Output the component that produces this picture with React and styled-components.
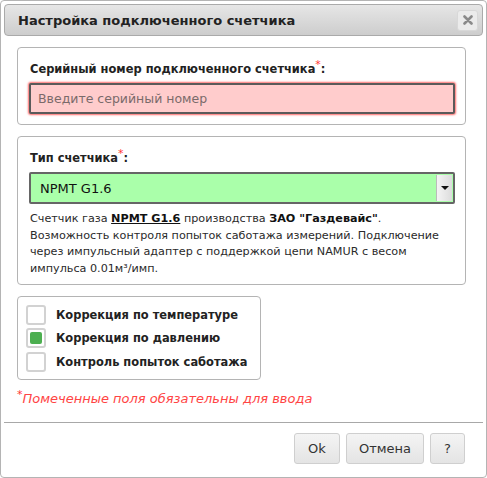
import React from 'react';
import styled, { createGlobalStyle } from 'styled-components';

const GlobalStyle = createGlobalStyle`
  html, body {
    margin: 0;
    padding: 0;
    background: #ffffff;
  }
  body {
    font-family: "DejaVu Sans", Verdana, sans-serif;
    color: #222;
  }
`;

const Dialog = styled.div`
  box-sizing: border-box;
  width: 487px;
  height: 478px;
  border: 1px solid #b4b4b4;
  border-radius: 4px;
  padding: 3px;
  display: flex;
  flex-direction: column;
  background: #fff;
`;

const TitleBar = styled.div`
  box-sizing: border-box;
  height: 32px;
  border: 1px solid #aaa;
  border-radius: 4px;
  background: linear-gradient(#e6e6e6, #cdcdcd);
  display: flex;
  align-items: center;
  justify-content: space-between;
  padding: 0 4px 0 13px;
`;

const Title = styled.span`
  font-size: 13px;
  font-weight: bold;
  color: #222;
`;

const CloseButton = styled.button`
  box-sizing: border-box;
  width: 21px;
  height: 21px;
  padding: 0;
  border: 1px solid #d8d8d8;
  border-radius: 3px;
  background: #ebebeb;
  display: flex;
  align-items: center;
  justify-content: center;
`;

const Content = styled.div`
  padding: 11px 18px 0 13px;
  display: flex;
  flex-direction: column;
`;

const Group = styled.div`
  box-sizing: border-box;
  width: ${p => p.width || '449px'};
  border: 1px solid #b4b4b4;
  border-radius: 4px;
  padding: ${p => p.pad || '13px 11px 10px 11px'};
  margin-bottom: ${p => p.gap || '11px'};
`;

const Label = styled.div`
  font-size: 11.45px;
  font-weight: bold;
  line-height: 16px;
  margin: 0 0 6px 1px;
  color: #222;
`;

const Star = styled.sup`
  color: #f33;
  font-weight: normal;
  font-size: 11px;
  vertical-align: 5px;
  line-height: 0;
`;

const Input = styled.input`
  box-sizing: border-box;
  width: 426px;
  height: 31px;
  border: 2px solid #5a5a5a;
  border-radius: 2px;
  background: #ffcccc;
  box-shadow: 0 0 2px 1px #ff6b6b;
  outline: none;
  padding: 0 7px;
  font-family: "DejaVu Sans", Verdana, sans-serif;
  font-size: 12.5px;
  color: #333;
  &::placeholder {
    color: #7a6a6a;
  }
`;

const Select = styled.div`
  box-sizing: border-box;
  width: 426px;
  height: 32px;
  border: 2px solid #666;
  border-radius: 2px;
  background: #aaffaa;
  display: flex;
  align-items: stretch;
`;

const SelectValue = styled.div`
  flex: 1;
  display: flex;
  align-items: center;
  padding-left: 9px;
  font-size: 13px;
  color: #111;
`;

const ArrowButton = styled.div`
  width: 15px;
  margin: 1px 1px 1px 0;
  background: linear-gradient(90deg, #f4f4f4, #dcdcdc);
  border-left: 1px solid #bbb;
  display: flex;
  align-items: center;
  justify-content: center;
`;

const Triangle = styled.div`
  width: 0;
  height: 0;
  border-left: 4px solid transparent;
  border-right: 4px solid transparent;
  border-top: 4px solid #111;
`;

const Description = styled.p`
  margin: 7px 0 0 1px;
  font-size: 11.2px;
  line-height: 16.7px;
  color: #2a2a2a;
  b {
    color: #111;
  }
  u {
    font-weight: bold;
    color: #111;
  }
`;

const CheckRow = styled.label`
  display: flex;
  align-items: center;
  gap: 10px;
  height: 20px;
  margin-bottom: ${p => (p.last ? '0' : '3.5px')};
  font-size: 11.45px;
  font-weight: bold;
  color: #222;
  white-space: nowrap;
`;

const Box = styled.span`
  box-sizing: border-box;
  width: 20px;
  height: 20px;
  border: 2px solid #d2d2d2;
  border-radius: 3px;
  background: #fff;
  padding: 2px;
  display: flex;
`;

const BoxFill = styled.span`
  flex: 1;
  border-radius: 2px;
  background: #4caf50;
`;

const Note = styled.div`
  font-size: 13px;
  font-style: italic;
  color: #f44;
  margin: 11px 0 0 0;
  line-height: 16px;
`;

const Divider = styled.div`
  height: 1px;
  background: #a8a8a8;
  margin-top: 15px;
`;

const Footer = styled.div`
  display: flex;
  justify-content: flex-end;
  gap: 6px;
  padding: 10px 18px 0 0;
`;

const Button = styled.button`
  box-sizing: border-box;
  height: 31px;
  min-width: ${p => p.w || '46px'};
  border: 1px solid #cfcfcf;
  border-radius: 3px;
  background: linear-gradient(#f4f4f4, #e4e4e4);
  font-family: "DejaVu Sans", Verdana, sans-serif;
  font-size: 13px;
  color: #333;
  padding: 0 12px;
`;

const checks = [
  { text: 'Коррекция по температуре', on: false },
  { text: 'Коррекция по давлению', on: true },
  { text: 'Контроль попыток саботажа', on: false },
];

export default function App() {
  return (
    <>
      <GlobalStyle />
      <Dialog>
        <TitleBar>
          <Title>Настройка подключенного счетчика</Title>
          <CloseButton aria-label="close">
            <svg width="10" height="10" viewBox="0 0 10 10">
              <path d="M1.5 1.5 L8.5 8.5 M8.5 1.5 L1.5 8.5" stroke="#8a8a8a" strokeWidth="2.6" strokeLinecap="round" />
            </svg>
          </CloseButton>
        </TitleBar>
        <Content>
          <Group pad="13px 11px 10px 11px">
            <Label>Серийный номер подключенного счетчика<Star>*</Star>:</Label>
            <Input placeholder="Введите серийный номер" />
          </Group>
          <Group pad="13px 11px 6px 11px">
            <Label>Тип счетчика<Star>*</Star>:</Label>
            <Select>
              <SelectValue>NPMT G1.6</SelectValue>
              <ArrowButton><Triangle /></ArrowButton>
            </Select>
            <Description>
              Счетчик газа <u>NPMT G1.6</u> производства <b>ЗАО "Газдевайс"</b>.
              Возможность контроля попыток саботажа измерений. Подключение
              через импульсный адаптер с поддержкой цепи NAMUR с весом
              импульса 0.01м³/имп.
            </Description>
          </Group>
          <Group width="244px" pad="8px 8px 7px 8px" gap="0">
            {checks.map((c, i) => (
              <CheckRow key={c.text} last={i === checks.length - 1}>
                <Box>{c.on && <BoxFill />}</Box>
                {c.text}
              </CheckRow>
            ))}
          </Group>
          <Note><Star>*</Star>Помеченные поля обязательны для ввода</Note>
        </Content>
        <Divider />
        <Footer>
          <Button w="46px">Ok</Button>
          <Button w="78px">Отмена</Button>
          <Button w="35px">?</Button>
        </Footer>
      </Dialog>
    </>
  );
}
